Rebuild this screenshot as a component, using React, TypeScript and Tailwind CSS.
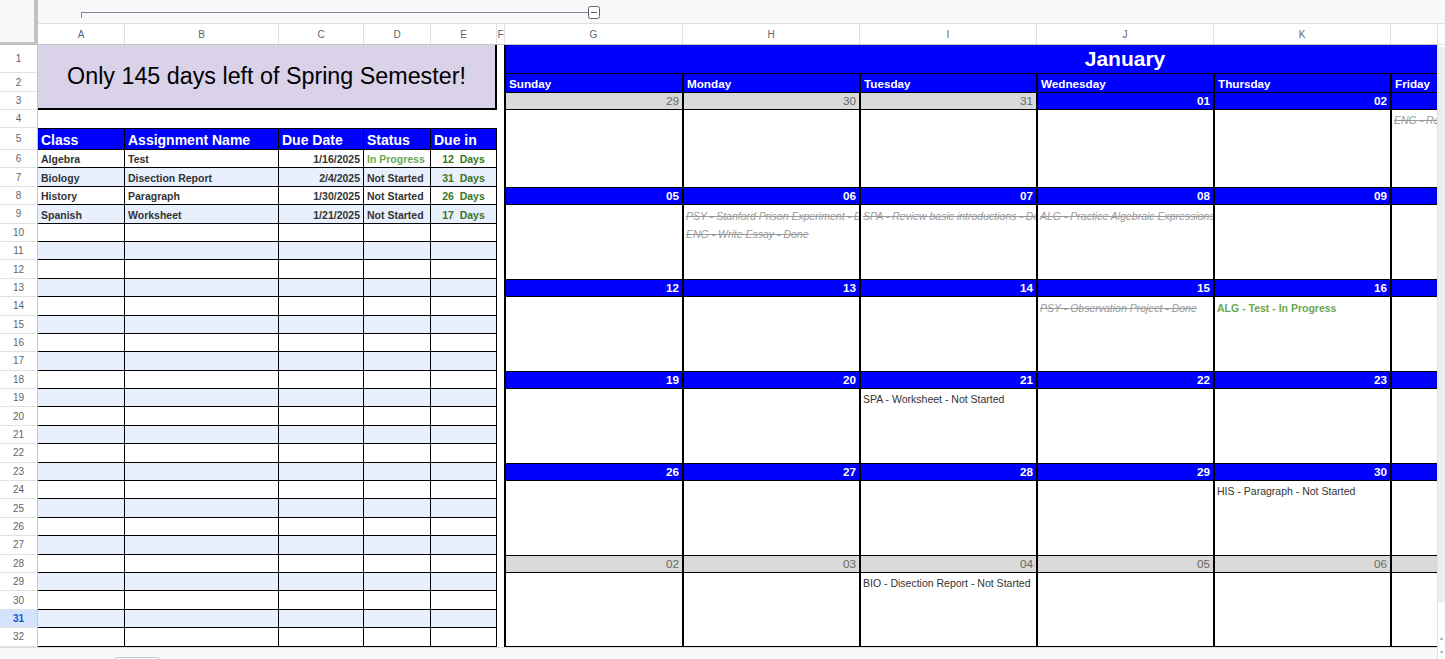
import React from 'react';

const ROWS = 'grid-rows-[28px_19px_18px_18px_22px_repeat(27,18.4px)]';

type Kind = 'done' | 'progress' | 'todo';

interface CalEvent {
  text: string;
  kind: Kind;
}

interface Week {
  dates: [string, boolean][]; // [label, isOtherMonth]
  events: Record<number, CalEvent[]>;
}

const columns = [
  { l: 'A', w: 'w-[87px]' },
  { l: 'B', w: 'w-[154px]' },
  { l: 'C', w: 'w-[85px]' },
  { l: 'D', w: 'w-[67px]' },
  { l: 'E', w: 'w-[66px]' },
  { l: 'F', w: 'w-[8px]' },
  { l: 'G', w: 'w-[178px]' },
  { l: 'H', w: 'w-[177px]' },
  { l: 'I', w: 'w-[177px]' },
  { l: 'J', w: 'w-[177px]' },
  { l: 'K', w: 'w-[177px]' },
  { l: 'L', w: 'w-[177px]' },
];

const assignments = [
  { cls: 'Algebra', name: 'Test', due: '1/16/2025', status: 'In Progress', days: 12 },
  { cls: 'Biology', name: 'Disection Report', due: '2/4/2025', status: 'Not Started', days: 31 },
  { cls: 'History', name: 'Paragraph', due: '1/30/2025', status: 'Not Started', days: 26 },
  { cls: 'Spanish', name: 'Worksheet', due: '1/21/2025', status: 'Not Started', days: 17 },
];

const dayNames = ['Sunday', 'Monday', 'Tuesday', 'Wednesday', 'Thursday', 'Friday', 'Saturday'];

const weeks: Week[] = [
  {
    dates: [['29', true], ['30', true], ['31', true], ['01', false], ['02', false], ['03', false], ['04', false]],
    events: { 5: [{ text: 'ENG - Read Chapter 1 - Done', kind: 'done' }] },
  },
  {
    dates: [['05', false], ['06', false], ['07', false], ['08', false], ['09', false], ['10', false], ['11', false]],
    events: {
      1: [
        { text: 'PSY - Stanford Prison Experiment - Done', kind: 'done' },
        { text: 'ENG - Write Essay - Done', kind: 'done' },
      ],
      2: [{ text: 'SPA - Review basic introductions - Done', kind: 'done' }],
      3: [{ text: 'ALG - Practice Algebraic Expressions - Done', kind: 'done' }],
    },
  },
  {
    dates: [['12', false], ['13', false], ['14', false], ['15', false], ['16', false], ['17', false], ['18', false]],
    events: {
      3: [{ text: 'PSY - Observation Project - Done', kind: 'done' }],
      4: [{ text: 'ALG - Test - In Progress', kind: 'progress' }],
    },
  },
  {
    dates: [['19', false], ['20', false], ['21', false], ['22', false], ['23', false], ['24', false], ['25', false]],
    events: { 2: [{ text: 'SPA - Worksheet - Not Started', kind: 'todo' }] },
  },
  {
    dates: [['26', false], ['27', false], ['28', false], ['29', false], ['30', false], ['31', false], ['01', true]],
    events: { 4: [{ text: 'HIS - Paragraph - Not Started', kind: 'todo' }] },
  },
  {
    dates: [['02', true], ['03', true], ['04', true], ['05', true], ['06', true], ['07', true], ['08', true]],
    events: { 2: [{ text: 'BIO - Disection Report - Not Started', kind: 'todo' }] },
  },
];

const eventStyle: Record<Kind, string> = {
  done: 'italic line-through text-[#999999]',
  progress: 'font-bold text-[#6aa84f]',
  todo: 'text-[#333333]',
};

function TopChrome() {
  return (
    <div className="flex h-[45px] shrink-0">
      <div className="flex w-[38px] shrink-0 flex-col border-r-4 border-[#c2c2c2] bg-[#f8f9fa]">
        <div className="h-[24px]" />
        <div className="flex-1 border-b-[3px] border-[#c2c2c2]" />
      </div>
      <div className="flex min-w-0 flex-1 flex-col">
        <div className="h-[24px] border-b border-[#e1e1e1] bg-[#f8f9fa]">
          <svg width="600" height="23" viewBox="0 0 600 23">
            <path d="M43.5 18 V12.5 H550" stroke="#80868b" strokeWidth="1" fill="none" />
            <rect x="550.5" y="6.5" width="11" height="12" rx="2" fill="#fff" stroke="#5f6368" />
            <path d="M553 12.5 H559" stroke="#5f6368" strokeWidth="1" />
          </svg>
        </div>
        <div className="flex flex-1">
          <div className="flex w-[1399px] overflow-hidden border-b border-[#c7c7c7] bg-white">
            {columns.map((c) => (
              <div
                key={c.l}
                className={`${c.w} flex shrink-0 items-center justify-center border-r border-[#e1e1e1] text-[10px] text-[#5f6368]`}
              >
                {c.l}
              </div>
            ))}
          </div>
          <div className="flex-1 border-b border-l border-[#e1e1e1] bg-white" />
        </div>
      </div>
    </div>
  );
}

function RowHeaders() {
  return (
    <div className={`grid ${ROWS} w-[38px] shrink-0 border-r border-[#c7c7c7] bg-white`}>
      {Array.from({ length: 32 }, (_, i) => (
        <div
          key={i}
          className={`flex items-center justify-center border-b border-[#e1e1e1] text-[10px] ${
            i === 30 ? 'bg-[#d3e3fd] font-bold text-[#0b57d0]' : 'text-[#5f6368]'
          }`}
        >
          {i + 1}
        </div>
      ))}
    </div>
  );
}

function LeftPanel() {
  const cell = 'flex items-end overflow-hidden whitespace-nowrap border-r border-b border-black px-[3px] pb-[2px] text-[10.5px] leading-[12px] font-bold';
  return (
    <div className={`grid ${ROWS} grid-cols-[87px_154px_85px_67px_66px] w-[459px] shrink-0`}>
      <div className="col-span-5 row-span-3 flex items-center justify-center border-r-2 border-b-2 border-black bg-[#d9d2e9] text-[23.3px] text-black">
        Only 145 days left of Spring Semester!
      </div>
      <div className="col-span-5" />
      {['Class', 'Assignment Name', 'Due Date', 'Status', 'Due in'].map((h) => (
        <div
          key={h}
          className="flex items-end whitespace-nowrap border-t border-r border-b border-black bg-[#0000ff] px-[3px] pb-[1px] text-[14px] leading-[16px] font-bold text-white"
        >
          {h}
        </div>
      ))}
      {Array.from({ length: 27 }, (_, i) => {
        const a = assignments[i];
        const band = i % 2 === 1 ? 'bg-[#e8f0fe]' : 'bg-white';
        return (
          <React.Fragment key={i}>
            <div className={`${cell} ${band} text-[#333333]`}>{a?.cls}</div>
            <div className={`${cell} ${band} text-[#333333]`}>{a?.name}</div>
            <div className={`${cell} ${band} justify-end text-[#333333]`}>{a?.due}</div>
            <div className={`${cell} ${band} ${a?.status === 'In Progress' ? 'text-[#6aa84f]' : 'text-[#333333]'}`}>
              {a?.status}
            </div>
            <div className={`${cell} ${band} justify-center text-[#38761d]`}>
              {a ? `${a.days}\u00a0\u00a0Days` : ''}
            </div>
          </React.Fragment>
        );
      })}
    </div>
  );
}

function Calendar() {
  return (
    <div className={`grid ${ROWS} grid-cols-[178px_177px_177px_177px_177px_177px_177px] w-[1240px] shrink-0`}>
      <div className="col-span-7 flex items-center justify-center border-l-2 border-black bg-[#0000ff] text-[21px] font-bold text-white">
        January
      </div>
      {dayNames.map((d) => (
        <div
          key={d}
          className="flex items-end border-t border-l-2 border-black bg-[#0000ff] px-[3px] pb-[1px] text-[11.7px] leading-[14px] font-bold text-white"
        >
          {d}
        </div>
      ))}
      {weeks.map((w, wi) => (
        <React.Fragment key={wi}>
          {w.dates.map(([label, other], di) => (
            <div
              key={`d${di}`}
              className={`flex items-end justify-end border-t border-b-[1.5px] border-l-2 border-black pr-[3px] pb-[1px] text-[11.7px] leading-[14px] ${
                other ? 'bg-[#d9d9d9] text-[#666666]' : 'bg-[#0000ff] font-bold text-white'
              }`}
            >
              {label}
            </div>
          ))}
          {w.dates.map((_, di) => (
            <div
              key={`c${di}`}
              className={`row-span-4 flex flex-col overflow-hidden border-l-2 border-black bg-white ${
                wi === weeks.length - 1 ? 'border-b' : ''
              }`}
            >
              {(w.events[di] ?? []).map((e) => (
                <div
                  key={e.text}
                  className={`flex h-[18.4px] shrink-0 items-end whitespace-nowrap px-[2px] pb-[2px] text-[10.5px] leading-[12px] ${eventStyle[e.kind]}`}
                >
                  {e.text}
                </div>
              ))}
            </div>
          ))}
        </React.Fragment>
      ))}
    </div>
  );
}

function Scrollbar() {
  return (
    <div className="flex w-[8px] shrink-0 flex-col border-l border-[#e1e1e1] bg-white">
      <div className="mt-[2px] h-[556px] rounded-b-[3px] bg-[#eceff1]" />
      <div className="flex-1" />
      <div className="text-center text-[5px] leading-[8px] text-[#9aa0a6]">▲</div>
      <div className="h-[6px]" />
      <div className="pb-[3px] text-center text-[5px] leading-[8px] text-[#9aa0a6]">▼</div>
    </div>
  );
}

export default function App() {
  return (
    <div className="flex h-[659px] w-[1445px] flex-col overflow-hidden bg-white font-['Liberation_Sans',Arial,sans-serif]">
      <TopChrome />
      <div className="flex min-h-0 flex-1">
        <div className="flex w-[1437px] shrink-0 flex-col">
          <div className="flex shrink-0 overflow-hidden">
            <RowHeaders />
            <LeftPanel />
            <div className="w-[7px] shrink-0 bg-white" />
            <Calendar />
          </div>
          <div className="flex-1 border-t border-[#dadce0] bg-[#f8f9fa] pl-[112px] pt-[9px]">
            <div className="h-[20px] w-[50px] rounded-[6px] border border-[#c4c7c5] bg-white" />
          </div>
        </div>
        <Scrollbar />
      </div>
    </div>
  );
}
